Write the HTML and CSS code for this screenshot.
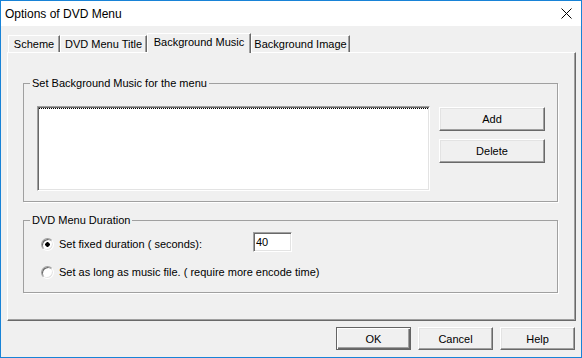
FILE: index.html
```html
<html>
<head>
    <link rel="stylesheet" href="styles.css">
</head>
<body>
<div class="window">
    <div class="titlebar">
        <span class="title">Options of DVD Menu</span>
        <svg class="close" width="11" height="11" viewBox="0 0 11 11">
            <path d="M0.5 0.5 L10.5 10.5 M10.5 0.5 L0.5 10.5" stroke="#000" stroke-width="1" fill="none"/>
        </svg>
    </div>

    <div class="client">
        <div class="tabs">
            <div class="tab tab-scheme">Scheme</div>
            <div class="tab tab-title">DVD Menu Title</div>
            <div class="tab tab-music active">Background Music</div>
            <div class="tab tab-image">Background Image</div>
        </div>

        <div class="panel">
            <fieldset class="group group-music">
                <legend>Set Background Music for the menu</legend>
                <div class="music-body">
                    <div class="listbox"><div class="focus"></div></div>
                    <div class="side-buttons">
                        <button class="btn btn-side">Add</button>
                        <button class="btn btn-side">Delete</button>
                    </div>
                </div>
            </fieldset>

            <fieldset class="group group-duration">
                <legend>DVD Menu Duration</legend>
                <div class="duration-body">
                    <div class="option-row first">
                        <span class="radio checked"></span>
                        <span class="option-label fixed">Set fixed duration ( seconds):</span>
                        <input class="seconds" type="text" value="40">
                    </div>
                    <div class="option-row">
                        <span class="radio"></span>
                        <span class="option-label">Set as long as music file. ( require more encode time)</span>
                    </div>
                </div>
            </fieldset>
        </div>

        <div class="dialog-buttons">
            <button class="btn btn-default">OK</button>
            <button class="btn">Cancel</button>
            <button class="btn">Help</button>
        </div>
    </div>
</div>
</body>
</html>
```

FILE: styles.css
```css
* { box-sizing: border-box; }

body {
    margin: 0;
    font-family: "Liberation Sans", Arial, sans-serif;
    font-size: 11px;
    color: #000;
}

.window {
    width: 582px;
    height: 358px;
    border: 1px solid #1883d7;
    background: #f0f0f0;
    display: flex;
    flex-direction: column;
}

.titlebar {
    height: 25px;
    background: #ffffff;
    display: flex;
    align-items: center;
    justify-content: space-between;
    padding: 0 9px 0 4px;
}
.title { font-size: 12px; }
.close { display: block; }

.client {
    flex: 1;
    padding: 7px 5px 0 6px;
}

/* tab strip */
.tabs {
    display: flex;
    align-items: flex-end;
    height: 19px;
    padding-left: 1px;
}
.tab {
    height: 17px;
    padding-top: 2px;
    line-height: 13px;
    text-align: center;
    white-space: nowrap;
    border: 1px solid;
    border-bottom: none;
    border-color: #ffffff #696969 transparent #ffffff;
    box-shadow: inset -1px 0 #a0a0a0;
}
.tab-scheme { width: 52px; }
.tab-title  { width: 87px; }
.tab-music  { width: 104px; }
.tab-image  { width: 99px; }
.tab.active {
    height: 20px;
    margin-bottom: -1px;
    background: #f0f0f0;
    position: relative;
    z-index: 1;
}

.panel {
    height: 269px;
    border: 1px solid;
    border-color: #ffffff #696969 #696969 #ffffff;
    box-shadow: inset -1px -1px #a0a0a0;
    padding: 24px 17px 0 15px;
}

/* group boxes */
.group {
    margin: 0;
    padding: 0;
    min-width: 0;
    border: 1px solid #a0a0a0;
    box-shadow: 1px 1px 0 #ffffff;
}
.group legend {
    line-height: 13px;
    padding: 0 2px;
    margin-left: 6px;
}
.music-body {
    display: flex;
    gap: 9px;
    align-items: flex-start;
    padding: 16px 12px 10px 13px;
}
.group-duration { margin-top: 12px; }
.duration-body { padding: 5px 12px 13px 17px; }

.listbox {
    width: 393px;
    height: 85px;
    background: #ffffff;
    border: 1px solid;
    border-color: #a0a0a0 #ffffff #ffffff #a0a0a0;
    box-shadow: inset 1px 1px #696969, inset -1px -1px #e3e3e3;
    padding: 1px 1px 0 1px;
}
.focus { border-top: 1px dotted #000; }

.side-buttons {
    display: flex;
    flex-direction: column;
    gap: 8px;
    margin-top: 1px;
}

/* buttons */
.btn {
    width: 75px;
    height: 23px;
    padding: 0;
    font-family: "Liberation Sans", Arial, sans-serif;
    font-size: 11px;
    color: #000;
    background: #f0f0f0;
    border: 1px solid;
    border-color: #ffffff #696969 #696969 #ffffff;
    box-shadow: inset -1px -1px #a0a0a0, inset 1px 1px #e3e3e3;
}
.btn-side {
    width: 106px;
    height: 24px;
}
.btn-default {
    border-color: #646464;
    box-shadow: inset 1px 1px #ffffff, inset -1px -1px #696969, inset -2px -2px #a0a0a0;
}

.dialog-buttons {
    display: flex;
    justify-content: flex-end;
    gap: 7px;
    margin: 6px 1px 0 0;
}

/* radio rows */
.option-row {
    display: flex;
    align-items: flex-start;
    line-height: 13px;
}
.option-row + .option-row { margin-top: 14px; }
.option-row.first .radio,
.option-row.first .option-label { margin-top: 6px; }

.radio {
    width: 13px;
    height: 13px;
    border-radius: 50%;
    border: 1px solid;
    border-color: #a0a0a0 #ffffff #ffffff #a0a0a0;
    box-shadow: inset 1px 1px #696969, inset -1px -1px #e3e3e3;
    background: #ffffff;
    margin-right: 5px;
    flex: none;
}
.radio.checked {
    background: radial-gradient(circle, #000 0 2px, #ffffff 2.5px);
}
.option-label.fixed { width: 194px; }

.seconds {
    width: 39px;
    height: 20px;
    margin: 0;
    padding: 0 2px;
    font-family: "Liberation Sans", Arial, sans-serif;
    font-size: 11px;
    color: #000;
    background: #ffffff;
    border: 1px solid;
    border-color: #a0a0a0 #ffffff #ffffff #a0a0a0;
    box-shadow: inset 1px 1px #696969, inset -1px -1px #e3e3e3;
    outline: none;
}
```
